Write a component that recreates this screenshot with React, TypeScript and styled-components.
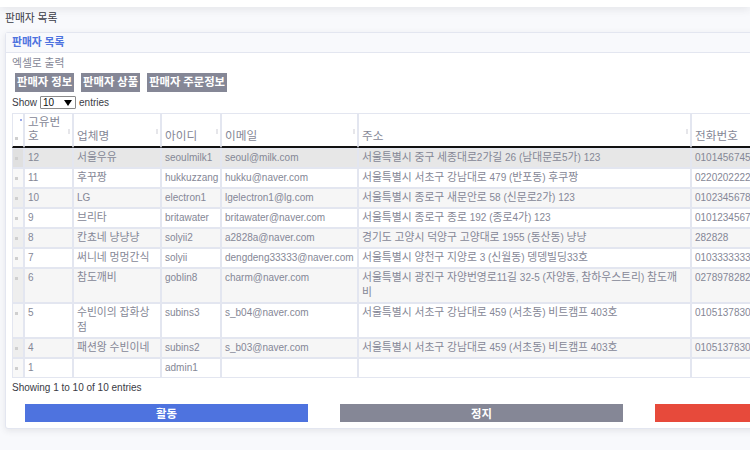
import React from "react";
import styled, { createGlobalStyle } from "styled-components";

const GlobalStyle = createGlobalStyle`
  html, body {
    margin: 0;
    padding: 0;
    background: #f8f9fc;
    overflow: hidden;
    width: 750px;
    height: 450px;
  }
  body {
    font-family: "Liberation Sans", "Noto Sans CJK KR", sans-serif;
    color: #858796;
  }
  * { box-sizing: border-box; }
`;

/* Hangul runs are drawn a little larger than Latin text, as in the reference */
const Hangul = styled.span`
  font-size: 1.08em;
  line-height: 1;
`;

const HANGUL_RUN = /([\u1100-\u11FF\u3131-\u318E\uAC00-\uD7A3]+)/;

function K({ children }: { children: string }) {
  const parts = children.split(HANGUL_RUN);
  return (
    <>
      {parts.map((p, i) =>
        i % 2 === 1 ? <Hangul key={i}>{p}</Hangul> : p ? <React.Fragment key={i}>{p}</React.Fragment> : null
      )}
    </>
  );
}

const Topbar = styled.div`
  height: 7px;
  background: #ffffff;
  box-shadow: 0 2px 8px rgba(58, 59, 69, 0.12);
`;

const PageHeading = styled.h1`
  margin: 5px 0 0 5px;
  font-size: 10px;
  line-height: 14px;
  font-weight: 400;
  color: #3a3b45;
`;

const Card = styled.div`
  margin: 6px 0 0 5px;
  width: 970px;
  background: #ffffff;
  border: 1px solid #e3e6f0;
  border-radius: 3px;
  box-shadow: 0 2px 6px rgba(58, 59, 69, 0.1);
`;

const CardHeader = styled.div`
  height: 20px;
  display: flex;
  align-items: center;
  padding: 0 6px;
  background: #f8f9fc;
  border-bottom: 1px solid #e3e6f0;
`;

const CardTitle = styled.h6`
  margin: 0;
  font-size: 10px;
  font-weight: 700;
  color: #4e73df;
`;

const CardBody = styled.div`
  padding: 4px 6px 6px 6px;
`;

const ExcelLabel = styled.div`
  font-size: 10px;
  line-height: 13px;
  color: #858796;
`;

const ButtonRow = styled.div`
  display: flex;
  gap: 7px;
  margin: 3px 0 0 3px;
`;

const GrayButton = styled.button`
  height: 19px;
  padding: 0 2px;
  border: none;
  border-radius: 0;
  background: #858796;
  color: #ffffff;
  font-family: "Liberation Sans", "Noto Sans CJK KR", sans-serif;
  font-size: 10.5px;
  font-weight: 700;
  line-height: 19px;
`;

const LengthRow = styled.div`
  display: flex;
  align-items: center;
  gap: 3px;
  margin-top: 4px;
  font-size: 10px;
  line-height: 12px;
  color: #3a3b45;
`;

const FakeSelect = styled.span`
  display: inline-flex;
  align-items: center;
  justify-content: space-between;
  width: 36px;
  height: 13px;
  padding: 0 3px 0 2px;
  border: 1px solid #8a8a8a;
  border-radius: 1px;
  font-size: 10px;
  color: #111;
  background: #fff;
`;

const Table = styled.table`
  margin-top: 4px;
  border-collapse: separate;
  border-spacing: 0;
  table-layout: fixed;
  width: 830px;
  font-size: 10px;
`;

const Th = styled.th<{ $w: number }>`
  position: relative;
  width: ${(p) => p.$w}px;
  padding: 1px 3px 3px;
  border: 1px solid #e3e6f0;
  border-bottom: 2px solid #111;
  vertical-align: bottom;
  text-align: left;
  font-size: 10.8px;
  line-height: 14px;
  font-weight: 400;
  color: #858796;
  background: #fff;
`;

const SortMark = styled.span`
  position: absolute;
  right: 2px;
  top: 15px;
  width: 2px;
  height: 5px;
  background: #e6e6ea;
`;

type Tone = "sel" | "odd" | "even";

const Row = styled.tr<{ $tone: Tone }>`
  background: ${(p) =>
    p.$tone === "sel" ? "#e7e7e7" : p.$tone === "odd" ? "#f6f6f6" : "#ffffff"};
`;

const Td = styled.td`
  padding: 1px 4px 2px 3px;
  border: 1px solid #e3e6f0;
  vertical-align: top;
  line-height: 15px;
  color: #858796;
  overflow: hidden;
`;

const PhoneTd = styled(Td)`
  white-space: nowrap;
`;

const CheckTd = styled.td<{ $tone: Tone }>`
  position: relative;
  padding: 0;
  border: 1px solid #e3e6f0;
  background: ${(p) =>
    p.$tone === "sel" ? "#e0e0e0" : p.$tone === "odd" ? "#eeeeee" : "#f8f8f8"};
`;

const CheckDot = styled.span<{ $top: number }>`
  position: absolute;
  left: 2px;
  top: ${(p) => p.$top}px;
  width: 3px;
  height: 3px;
  background: #cfcfcf;
`;

const BlueDot = styled.span`
  position: absolute;
  right: 1px;
  top: 5px;
  width: 2px;
  height: 2px;
  background: #9aa8e8;
`;

const InfoText = styled.div`
  margin-top: 3px;
  font-size: 10px;
  line-height: 14px;
  color: #3a3b45;
`;

const ActionRow = styled.div`
  display: grid;
  grid-template-columns: repeat(3, 283px);
  gap: 32px;
  margin: 9px 0 0 13px;
`;

const ActionButton = styled.button<{ $color: string }>`
  height: 18px;
  border: none;
  border-radius: 0;
  background: ${(p) => p.$color};
  color: #fff;
  font-family: "Liberation Sans", "Noto Sans CJK KR", sans-serif;
  font-size: 10.5px;
  font-weight: 700;
  line-height: 18px;
`;

type Seller = {
  no: string;
  name: string;
  id: string;
  email: string;
  addr: string;
  phone: string;
};

const sellers: Seller[] = [
  { no: "12", name: "서울우유", id: "seoulmilk1", email: "seoul@milk.com", addr: "서울특별시 중구 세종대로2가길 26 (남대문로5가) 123", phone: "01014567456" },
  { no: "11", name: "후꾸짱", id: "hukkuzzang", email: "hukku@naver.com", addr: "서울특별시 서초구 강남대로 479 (반포동) 후쿠짱", phone: "0220202222" },
  { no: "10", name: "LG", id: "electron1", email: "lgelectron1@lg.com", addr: "서울특별시 종로구 새문안로 58 (신문로2가) 123", phone: "01023456789" },
  { no: "9", name: "브리타", id: "britawater", email: "britawater@naver.com", addr: "서울특별시 종로구 종로 192 (종로4가) 123", phone: "01012345678" },
  { no: "8", name: "칸쵸네 냥냥냥", id: "solyii2", email: "a2828a@naver.com", addr: "경기도 고양시 덕양구 고양대로 1955 (동산동) 냥냥", phone: "282828" },
  { no: "7", name: "써니네 멍멍간식", id: "solyii", email: "dengdeng33333@naver.com", addr: "서울특별시 양천구 지양로 3 (신월동) 뎅뎅빌딩33호", phone: "01033333333" },
  { no: "6", name: "참도깨비", id: "goblin8", email: "charm@naver.com", addr: "서울특별시 광진구 자양번영로11길 32-5 (자양동, 참하우스트리) 참도깨비", phone: "0278978282" },
  { no: "5", name: "수빈이의 잡화상점", id: "subins3", email: "s_b04@naver.com", addr: "서울특별시 서초구 강남대로 459 (서초동) 비트캠프 403호", phone: "01051378300" },
  { no: "4", name: "패션왕 수빈이네", id: "subins2", email: "s_b03@naver.com", addr: "서울특별시 서초구 강남대로 459 (서초동) 비트캠프 403호", phone: "01051378300" },
  { no: "1", name: "", id: "admin1", email: "", addr: "", phone: "" },
];

const columns: { label: string; w: number }[] = [
  { label: "고유번호", w: 49 },
  { label: "업체명", w: 88 },
  { label: "아이디", w: 60 },
  { label: "이메일", w: 137 },
  { label: "주소", w: 333 },
  { label: "전화번호", w: 151 },
];

const toneFor = (i: number): Tone => (i === 0 ? "sel" : i % 2 === 0 ? "odd" : "even");

function SelectArrow() {
  return (
    <svg width="8" height="6" viewBox="0 0 8 6" aria-hidden="true">
      <path d="M0 0 H8 L4 6 Z" fill="#000" />
    </svg>
  );
}

export default function App() {
  return (
    <>
      <GlobalStyle />
      <Topbar />
      <PageHeading>
        <K>판매자 목록</K>
      </PageHeading>
      <Card>
        <CardHeader>
          <CardTitle>
            <K>판매자 목록</K>
          </CardTitle>
        </CardHeader>
        <CardBody>
          <ExcelLabel>
            <K>엑셀로 출력</K>
          </ExcelLabel>
          <ButtonRow>
            <GrayButton>
              <K>판매자 정보</K>
            </GrayButton>
            <GrayButton>
              <K>판매자 상품</K>
            </GrayButton>
            <GrayButton>
              <K>판매자 주문정보</K>
            </GrayButton>
          </ButtonRow>
          <LengthRow>
            Show
            <FakeSelect>
              10
              <SelectArrow />
            </FakeSelect>
            entries
          </LengthRow>
          <Table>
            <thead>
              <tr>
                <Th $w={12}>
                  <BlueDot />
                  <CheckDot $top={23} />
                </Th>
                {columns.map((c) => (
                  <Th key={c.label} $w={c.w}>
                    <K>{c.label}</K>
                    <SortMark />
                  </Th>
                ))}
              </tr>
            </thead>
            <tbody>
              {sellers.map((s, i) => {
                const tone = toneFor(i);
                return (
                  <Row key={s.no} $tone={tone}>
                    <CheckTd $tone={tone}>
                      <CheckDot $top={8} />
                    </CheckTd>
                    <Td>{s.no}</Td>
                    <Td>
                      <K>{s.name}</K>
                    </Td>
                    <Td>{s.id}</Td>
                    <Td>{s.email}</Td>
                    <Td>
                      <K>{s.addr}</K>
                    </Td>
                    <PhoneTd>{s.phone}</PhoneTd>
                  </Row>
                );
              })}
            </tbody>
          </Table>
          <InfoText>Showing 1 to 10 of 10 entries</InfoText>
          <ActionRow>
            <ActionButton $color="#4e73df">
              <K>활동</K>
            </ActionButton>
            <ActionButton $color="#858796">
              <K>정지</K>
            </ActionButton>
            <ActionButton $color="#e74a3b">
              <K>탈퇴</K>
            </ActionButton>
          </ActionRow>
        </CardBody>
      </Card>
    </>
  );
}
